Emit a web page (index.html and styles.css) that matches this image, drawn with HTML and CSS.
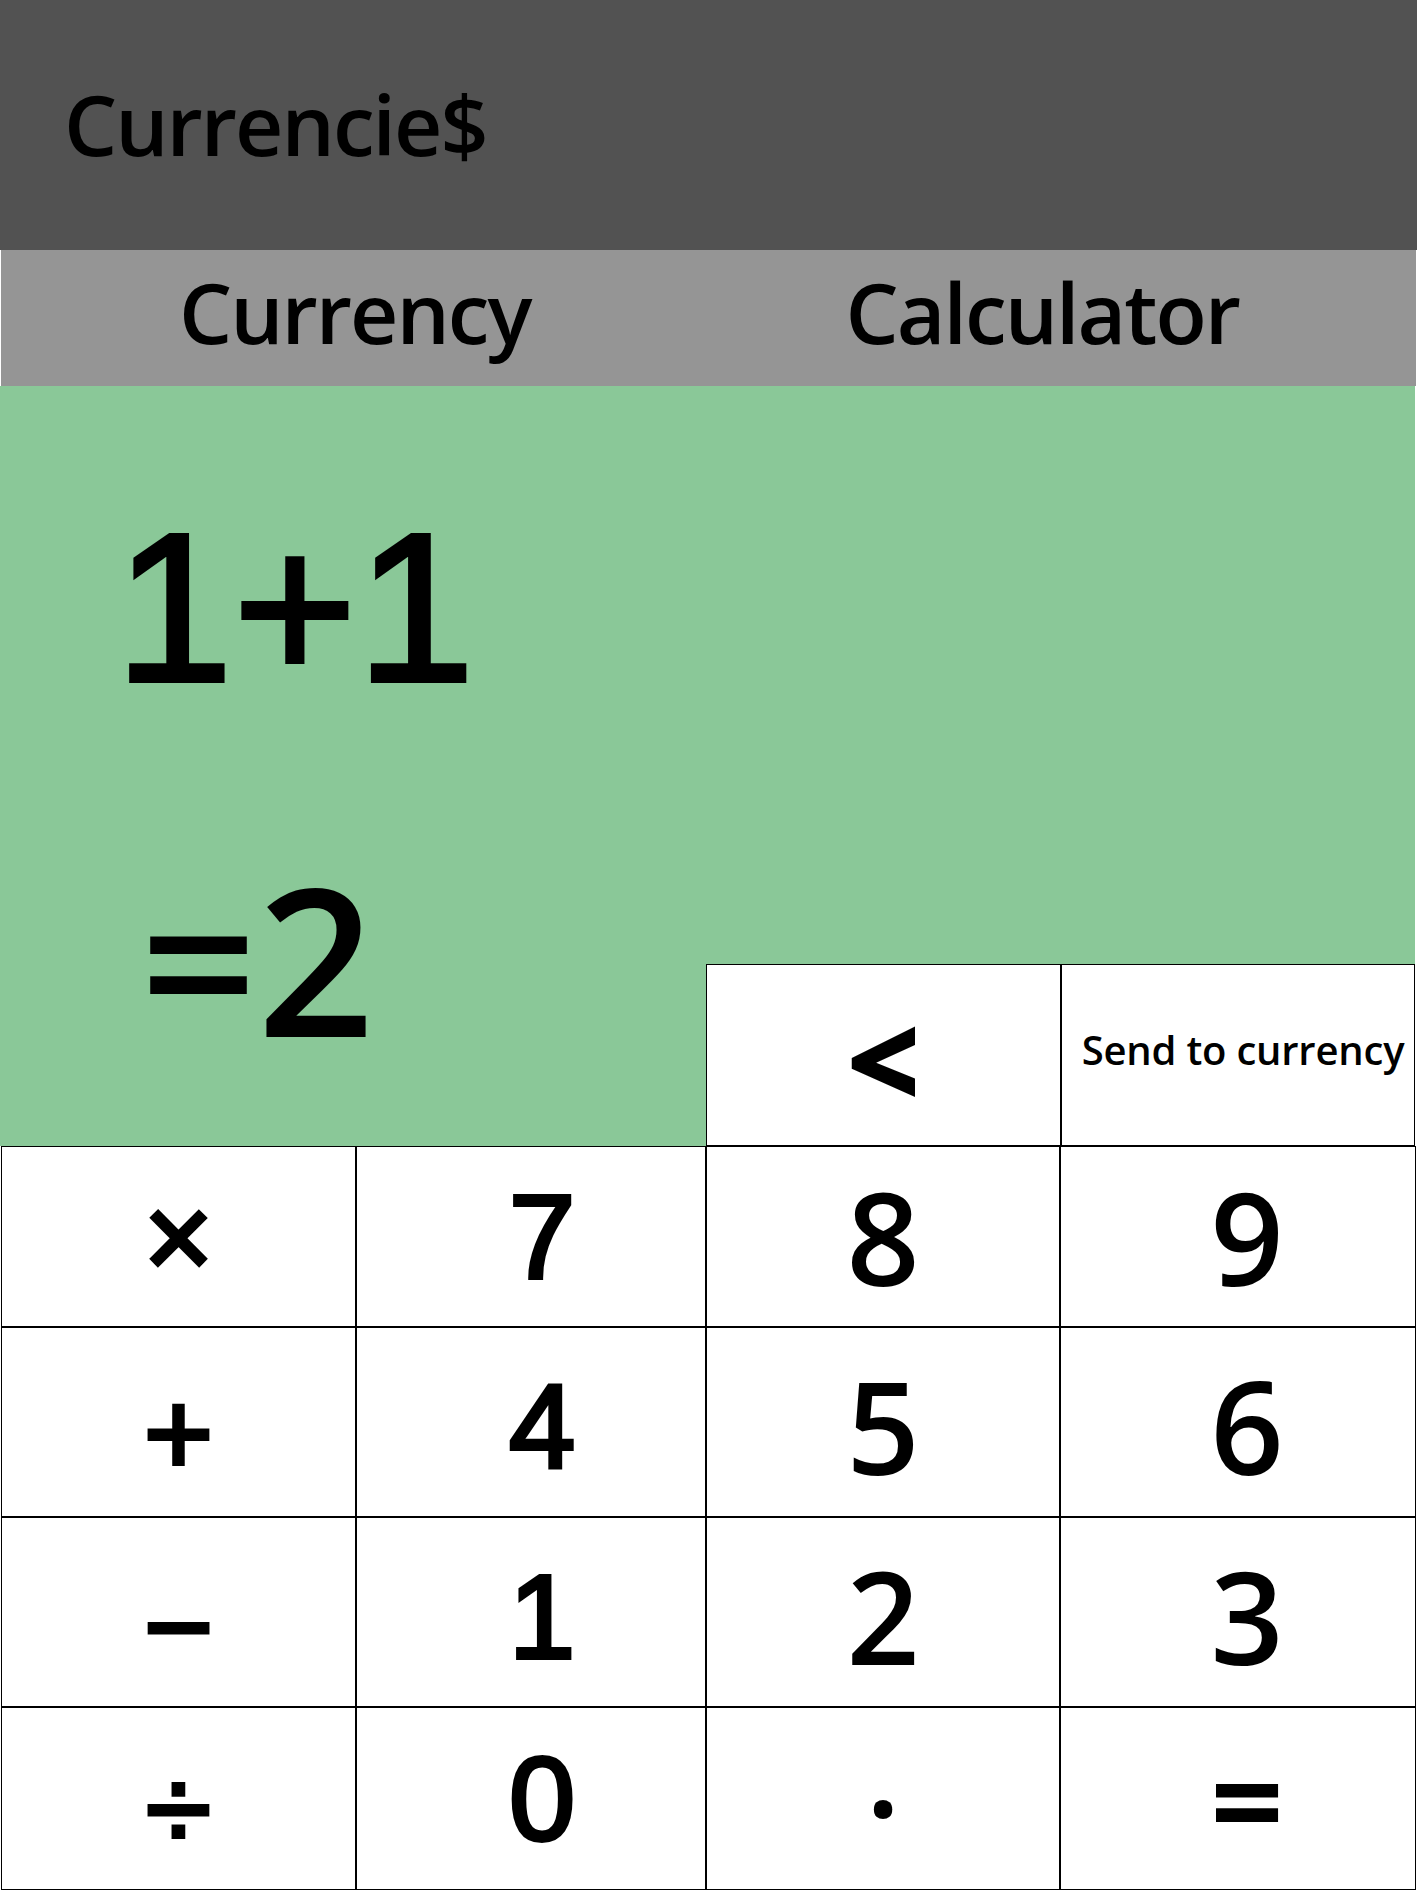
FILE: index.html
```html
<!DOCTYPE html>
<html lang="en">
<head>
<meta charset="utf-8">
<title>Currencie$</title>
<link rel="stylesheet" href="styles.css">
</head>
<body>
<header class="appbar">
  <h1 class="title">Currencie$</h1>
</header>
<nav class="tabs">
  <div class="tab">Currency</div>
  <div class="tab tab-calc">Calculator</div>
</nav>
<main class="calc">
  <section class="display">
    <div class="screen">
      <div class="expr">1+1</div>
      <div class="result">=2</div>
    </div>
    <div class="side">
      <div class="top-keys">
        <div class="key key-u key-back">&lt;</div>
        <div class="key key-send">Send to currency</div>
      </div>
    </div>
  </section>
  <section class="keypad">
    <div class="key key-a">&times;</div>
    <div class="key key-a">7</div>
    <div class="key key-u">8</div>
    <div class="key key-u">9</div>
    <div class="key key-a key-op">+</div>
    <div class="key key-a key-low">4</div>
    <div class="key key-u key-low">5</div>
    <div class="key key-u key-low">6</div>
    <div class="key key-a key-op key-minus">&minus;</div>
    <div class="key key-a key-low">1</div>
    <div class="key key-u key-low">2</div>
    <div class="key key-u key-low">3</div>
    <div class="key key-a key-op">&divide;</div>
    <div class="key key-a">0</div>
    <div class="key key-u key-dot">&middot;</div>
    <div class="key key-u key-eq">=</div>
  </section>
</main>
</body>
</html>
```

FILE: styles.css
```css
* {
  box-sizing: border-box;
}

html, body {
  margin: 0;
  padding: 0;
  background: #ffffff;
}

body {
  font-family: "Open Sans", "Noto Sans", sans-serif;
  color: #000000;
  overflow: hidden;
}

.appbar {
  height: 250px;
  background: #525252;
  padding: 82px 0 0 64px;
}

.title {
  margin: 0;
  font-size: 84px;
  font-weight: 600;
  letter-spacing: -2px;
  line-height: 1;
}

.tabs {
  height: 136px;
  margin: 0 1px;
  background: #959595;
  display: grid;
  grid-template-columns: 1fr 1fr;
}

.tab {
  font-size: 84px;
  font-weight: 600;
  letter-spacing: -2px;
  line-height: 1;
  text-align: center;
  padding-top: 20px;
}

.tab-calc {
  padding-right: 40px;
}

.display {
  height: 760px;
  margin-right: 2px;
  background: #8ac898;
  display: flex;
}

.screen {
  width: 706px;
  flex: none;
}

.expr {
  font-family: "Liberation Sans", Arial, sans-serif;
  font-weight: 400;
  font-size: 212px;
  -webkit-text-stroke: 4px #000000;
  letter-spacing: 0;
  line-height: 1;
  margin-top: 116px;
  padding-left: 115px;
}

.result {
  font-size: 205px;
  font-weight: 600;
  line-height: 1;
  margin-top: 141px;
  padding-left: 140px;
}

.side {
  flex: 1;
  display: flex;
  flex-direction: column;
  justify-content: flex-end;
}

.top-keys {
  height: 182px;
  display: grid;
  grid-template-columns: 355px 1fr;
}

.keypad {
  margin: 0 1px;
  display: grid;
  grid-template-columns: 355px 350px 354px 1fr;
  grid-template-rows: 181px 190px 190px 183px;
}

.key {
  background: #ffffff;
  border: 1px solid #000000;
  display: flex;
  align-items: center;
  justify-content: center;
  line-height: 1;
  white-space: nowrap;
}

.keypad .key:nth-child(4n+2) {
  padding-left: 22px;
}

.keypad .key:nth-child(4n) {
  padding-left: 18px;
}

.key-a {
  font-family: "Liberation Sans", Arial, sans-serif;
  font-weight: 400;
  font-size: 119px;
  -webkit-text-stroke: 4px #000000;
}

.key-u {
  font-size: 128px;
  font-weight: 600;
}

.key-op {
  padding-top: 20px;
}

.key-minus {
  padding-top: 28px;
}

.key-low {
  padding-top: 8px;
}

.key-back {
  font-weight: 800;
  padding-top: 8px;
}

.key-dot {
  padding-top: 14px;
}

.key-eq {
  font-weight: 700;
}

.key-send {
  font-size: 40px;
  font-weight: 600;
  letter-spacing: -0.2px;
  padding: 0 0 10px 10px;
}
```
